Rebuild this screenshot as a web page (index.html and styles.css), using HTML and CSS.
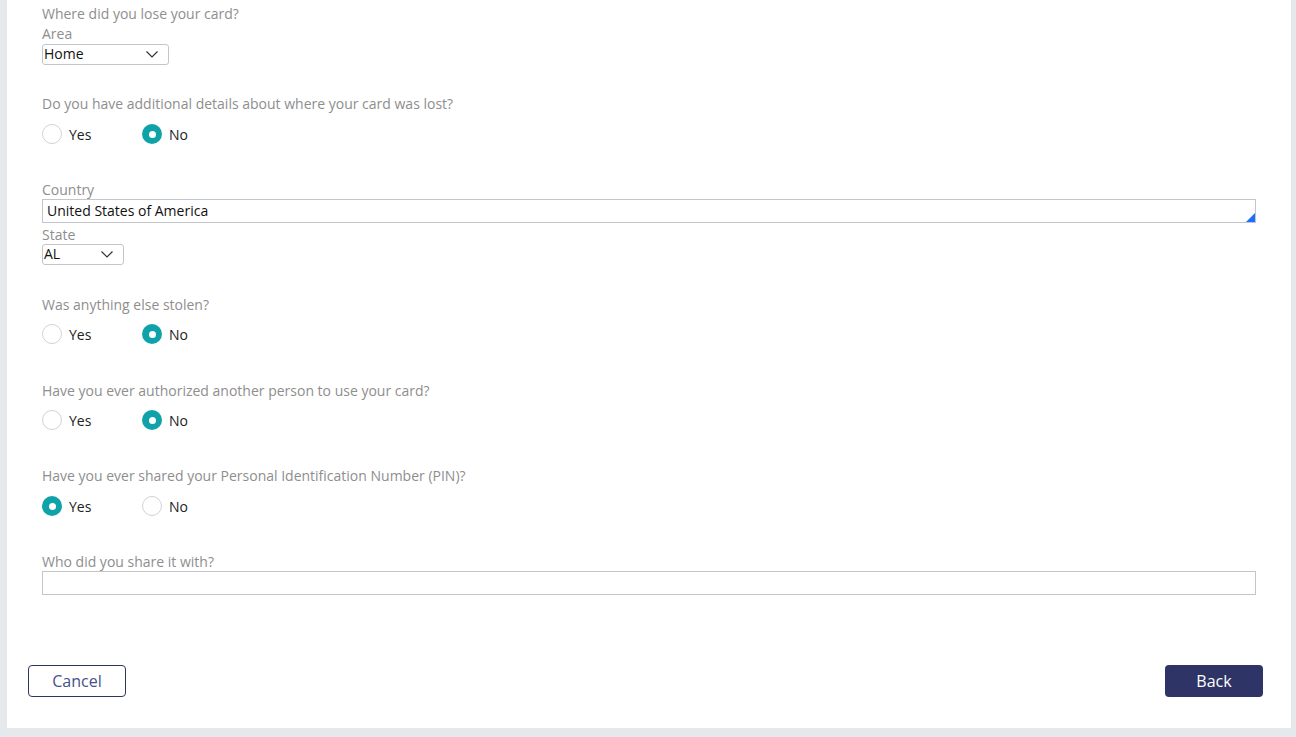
FILE: index.html
```html
<!DOCTYPE html>
<html>
<head>
<meta charset="utf-8">
<link rel="stylesheet" href="styles.css">
</head>
<body>
<div class="panel">
  <div class="form">
    <div class="label">Where did you lose your card?</div>
    <div class="label">Area</div>
    <div class="select w-area"><span>Home</span><svg class="chev" width="12" height="7" viewBox="0 0 12 7"><path d="M0.5 0.5 L6 6 L11.5 0.5" fill="none" stroke="#333" stroke-width="1.2"/></svg></div>

    <div class="label q">Do you have additional details about where your card was lost?</div>
    <div class="radios">
      <div class="opt"><span class="radio"></span>Yes</div>
      <div class="opt"><span class="radio on"></span>No</div>
    </div>

    <div class="label q2">Country</div>
    <div class="input"><span>United States of America</span><span class="tri"></span></div>
    <div class="label gap1">State</div>
    <div class="select w-state"><span>AL</span><svg class="chev" width="12" height="7" viewBox="0 0 12 7"><path d="M0.5 0.5 L6 6 L11.5 0.5" fill="none" stroke="#333" stroke-width="1.2"/></svg></div>

    <div class="label q qx">Was anything else stolen?</div>
    <div class="radios rx">
      <div class="opt"><span class="radio"></span>Yes</div>
      <div class="opt"><span class="radio on"></span>No</div>
    </div>

    <div class="label q2 qx">Have you ever authorized another person to use your card?</div>
    <div class="radios rx">
      <div class="opt"><span class="radio"></span>Yes</div>
      <div class="opt"><span class="radio on"></span>No</div>
    </div>

    <div class="label q2">Have you ever shared your Personal Identification Number (PIN)?</div>
    <div class="radios">
      <div class="opt"><span class="radio on"></span>Yes</div>
      <div class="opt"><span class="radio"></span>No</div>
    </div>

    <div class="label q2">Who did you share it with?</div>
    <div class="input"></div>
  </div>
  <div class="footer">
    <button class="btn cancel">Cancel</button>
    <button class="btn back">Back</button>
  </div>
</div>
</body>
</html>
```
FILE: styles.css
```css
html, body {
  margin: 0;
  padding: 0;
  background: #e5e9ec;
  font-family: "Open Sans", "Noto Sans", sans-serif;
}
.panel {
  margin-left: 7px;
  width: 1284px;
  height: 728px;
  background: #fff;
  display: flex;
  flex-direction: column;
}
.form {
  padding: 3px 35px 0 35px;
  display: flex;
  flex-direction: column;
}
.label {
  font-size: 14px;
  line-height: 19px;
  padding-top: 1px;
  color: #8e8e8e;
}
.q { margin-top: 28px; }
.q2 { margin-top: 35px; }
.q.qx { margin-top: 29px; }
.q2.qx { margin-top: 36px; }
.gap1 { margin-top: 1px; }
.select {
  box-sizing: border-box;
  height: 21px;
  border: 1px solid #c2c6cb;
  border-radius: 3px;
  display: flex;
  align-items: center;
  justify-content: space-between;
  padding: 0 10px 2px 1px;
  font-size: 14px;
  color: #111;
}
.w-area { width: 127px; margin-top: 1px; }
.w-state { width: 82px; }
.chev { display: block; margin-top: 2px; }
.input {
  box-sizing: border-box;
  position: relative;
  height: 24px;
  border: 1px solid #c2c6cb;
  display: flex;
  align-items: center;
  padding: 0 4px 1px 4px;
  font-size: 14px;
  color: #111;
}
.tri {
  position: absolute;
  right: 0;
  bottom: 0;
  width: 0;
  height: 0;
  border-left: 9px solid transparent;
  border-bottom: 9px solid #1a6fff;
}
.radios {
  display: flex;
  margin-top: 11px;
  height: 20px;
}
.radios.rx { margin-top: 10px; }
.opt {
  width: 100px;
  display: flex;
  align-items: center;
  gap: 7px;
  font-size: 14px;
  color: #222;
}
.radio {
  box-sizing: border-box;
  width: 20px;
  height: 20px;
  border-radius: 50%;
  border: 1px solid #cfd3d8;
  background: #fff;
  display: flex;
  align-items: center;
  justify-content: center;
}
.radio.on {
  border: none;
  background: #0fa3a9;
}
.radio.on::after {
  content: "";
  width: 7px;
  height: 7px;
  border-radius: 50%;
  background: #fff;
}
.footer {
  margin-top: 70px;
  padding: 0 28px 0 21px;
  display: flex;
  justify-content: space-between;
}
.btn {
  box-sizing: border-box;
  width: 98px;
  height: 32px;
  border-radius: 4px;
  font-family: "Open Sans", "Noto Sans", sans-serif;
  font-size: 16px;
  cursor: pointer;
}
.cancel {
  background: #fff;
  border: 1px solid #2e3566;
  color: #44518c;
}
.back {
  background: #2e3566;
  border: none;
  color: #fff;
}
```
